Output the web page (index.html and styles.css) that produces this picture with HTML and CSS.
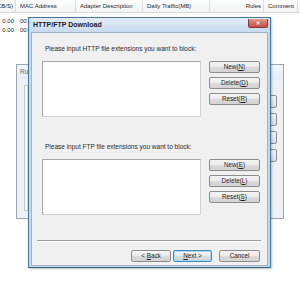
FILE: index.html
```html
<!DOCTYPE html>
<html lang="en">
<head>
  <meta charset="UTF-8">
  <title>HTTP/FTP Download</title>
  <link rel="stylesheet" href="styles.css">
</head>
<body>
  <div class="grid">
    <div class="grid-head">
      <div class="col c1"><span>(KB/S)</span></div>
      <div class="col c2">MAC Address</div>
      <div class="col c3">Adapter Description</div>
      <div class="col c4">Daily Traffic(MB)</div>
      <div class="col c5 right">Rules</div>
      <div class="col c6">Comment</div>
    </div>
    <div class="grid-row"><span class="c1 right">0.00</span><span class="c2">00:</span></div>
    <div class="grid-row"><span class="c1 right">0.00</span><span class="c2">00:</span></div>
  </div>

  <!-- window behind (inactive) -->
  <div class="win back-win">
    <div class="back-title">Ru</div>
    <div class="back-body">
      <div class="back-panel"></div>
      <div class="back-btns">
        <div class="back-btn"></div>
        <div class="back-btn"></div>
        <div class="back-btn"></div>
        <div class="back-btn"></div>
      </div>
    </div>
  </div>

  <!-- active dialog -->
  <div class="win dlg">
    <div class="titlebar">
      <span class="title">HTTP/FTP Download</span>
      <span class="close">&#x2715;</span>
    </div>
    <div class="dlg-body">
      <div class="group">
        <p class="label">Please input HTTP file extensions you want to block:</p>
        <div class="group-row">
          <div class="list"></div>
          <div class="side-btns">
            <button>New(<u>N</u>)</button>
            <button>Delete(<u>D</u>)</button>
            <button>Reset(<u>R</u>)</button>
          </div>
        </div>
      </div>
      <div class="group ftp">
        <p class="label">Please input FTP file extensions you want to block:</p>
        <div class="group-row">
          <div class="list"></div>
          <div class="side-btns">
            <button>New(<u>E</u>)</button>
            <button>Delete(<u>L</u>)</button>
            <button>Reset(<u>S</u>)</button>
          </div>
        </div>
      </div>
      <div class="sep"></div>
      <div class="footer">
        <button class="back">&lt; <u>B</u>ack</button>
        <button class="next default"><u>N</u>ext &gt;</button>
        <button class="cancel">Cancel</button>
      </div>
    </div>
  </div>
</body>
</html>
```

FILE: styles.css
```css
body {
  margin: 0;
  width: 300px;
  height: 283px;
  background: #fff;
  font-family: "Liberation Sans", Arial, sans-serif;
  font-size: 6px;
  color: #1e1e1e;
  position: relative;
  overflow: hidden;
}

/* list grid in the main window */
.grid-head {
  display: flex;
  height: 12px;
  background: linear-gradient(#ffffff, #f2f3f5);
  border-bottom: 1px solid #d8d8d8;
}

.col {
  display: flex;
  align-items: center;
  padding: 0 4px;
  border-right: 1px solid #dcdcdc;
  box-sizing: border-box;
  white-space: nowrap;
  overflow: hidden;
}

.col.right {
  justify-content: flex-end;
}

.c1 { width: 16px; padding: 0 2px 0 0; justify-content: flex-end; }
.c2 { width: 60px; }
.c3 { width: 67px; }
.c4 { width: 67px; }
.c5 { width: 54px; padding-right: 2px; }
.c6 { width: 34px; }

.grid-row {
  display: flex;
  height: 9px;
  align-items: center;
}

.grid-row span {
  display: block;
  box-sizing: border-box;
}

.grid-row .c1 {
  width: 14px;
  text-align: right;
  padding: 0;
}

.grid-row .c2 {
  padding-left: 6px;
}

.grid-head + .grid-row {
  margin-top: 3px;
}

/* windows */
.win {
  position: absolute;
  box-sizing: border-box;
}

.back-win {
  left: 16px;
  top: 64px;
  width: 268px;
  height: 155px;
  border: 1px solid #9aa6b2;
  background: #eef2f6;
  display: flex;
  flex-direction: column;
}

.back-title {
  height: 20px;
  line-height: 13px;
  padding-left: 3px;
  color: #6a6a6a;
  font-size: 6.5px;
  background: linear-gradient(#f2f6fa, #e4ecf4 14px, #eef2f6 15px);
}

.back-body {
  flex: 1;
  display: flex;
  gap: 4px;
  margin: 0 6px 7px 7px;
  background: #f0f0f0;
}

.back-panel {
  flex: 1;
  border: 1px solid #c2c2c2;
  box-shadow: inset 2px 0 0 #fff, inset 3px 0 0 #d4d4d4;
  background: #f7f7f7;
}

.back-btns {
  display: flex;
  flex-direction: column;
  gap: 5px;
  width: 40px;
  padding-top: 10px;
}

.back-btn {
  height: 11px;
  border: 1px solid #8e8e8e;
  border-radius: 2px;
  background: linear-gradient(#f4f4f4, #dedede);
}

.dlg {
  left: 28px;
  top: 17px;
  width: 243px;
  height: 251px;
  border: 1px solid #44789c;
  border-bottom-color: #2b6880;
  background: #c4d8ec;
  padding: 0 2px 2px 2px;
  display: flex;
  flex-direction: column;
  box-shadow: 1px 1px 2px rgba(0, 0, 0, 0.25);
}

.titlebar {
  height: 15px;
  display: flex;
  justify-content: space-between;
  align-items: flex-start;
  background: linear-gradient(#e2ecf7, #c8dbef);
}

.title {
  font-weight: bold;
  font-size: 7px;
  line-height: 14px;
  padding-left: 2px;
  color: #1b1b1b;
}

.close {
  width: 18px;
  height: 8px;
  margin-top: 1px;
  background: linear-gradient(#dc9a92, #c44c3f);
  border: 1px solid #8a3a33;
  border-top: none;
  border-radius: 0 0 2px 2px;
  color: #fff;
  font-size: 5px;
  line-height: 8px;
  text-align: center;
  font-weight: bold;
}

.dlg-body {
  flex: 1;
  background: #f0f0f0;
  border: 1px solid #9fb3c8;
  padding: 11px 6px 3px 5px;
  display: flex;
  flex-direction: column;
  font-size: 6.5px;
  color: #2a2a2a;
}

.label {
  margin: 0 0 8px 3px;
  line-height: 9px;
  white-space: nowrap;
}

.group {
  padding-left: 5px;
}

.group.ftp {
  margin-top: 25px;
}

.group-row {
  display: flex;
  gap: 8px;
}

.list {
  width: 159px;
  height: 56px;
  box-sizing: border-box;
  background: #fff;
  border: 1px solid #a7a7a7;
  border-right-color: #d3d3d3;
  border-bottom-color: #d3d3d3;
}

.side-btns {
  display: flex;
  flex-direction: column;
  gap: 4px;
  width: 51px;
}

button {
  font-family: "Liberation Sans", Arial, sans-serif;
  font-size: 6.3px;
  color: #222;
  height: 12px;
  padding: 0;
  box-sizing: border-box;
  border: 1px solid #8c8c8c;
  border-radius: 2px;
  background: linear-gradient(#f6f6f6 0%, #e9e9e9 50%, #dcdcdc 51%, #d2d2d2 100%);
  line-height: 10px;
}

.sep {
  margin-top: 25px;
  height: 0;
  border-top: 1px solid #a0a0a0;
  border-bottom: 1px solid #fff;
}

.footer {
  display: flex;
  justify-content: flex-end;
  margin-top: 8px;
  padding-right: 1px;
}

.footer .back { width: 40px; margin-right: 2px; }
.footer .next { width: 39px; margin-right: 7px; }
.footer .cancel { width: 41px; }

button.default {
  border-color: #3b8ac2;
  box-shadow: inset 0 0 0 1px #a9dbf6;
}
```
